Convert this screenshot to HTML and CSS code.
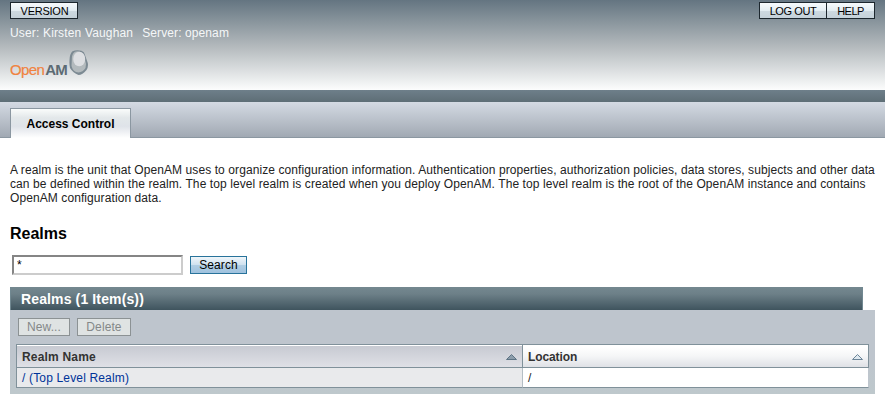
FILE: index.html
```html
<!DOCTYPE html>
<html lang="en">
<head>
<meta charset="utf-8">
<title>OpenAM</title>
<link rel="stylesheet" href="styles.css">
</head>
<body>
<header class="masthead">
  <div class="topbar">
    <button class="mast-btn version">VERSION</button>
    <div class="actions"><button class="mast-btn logout">LOG OUT</button><button class="mast-btn help">HELP</button></div>
  </div>
  <div class="session"><span class="user">User: Kirsten Vaughan</span><span class="server">Server: openam</span></div>
  <div class="logo">
    <span class="logo-open">Open</span><span class="logo-am">AM</span>
    <svg class="logo-mark" width="20" height="26" viewBox="0 0 20 26">
      <path d="M3.500 1.200 Q7.500 -.5 12.500 .8 Q15.500 1.800 16 5 L18.800 13 Q19.500 17 17.500 20 Q13.500 25 9.500 25 Q4 23 1 18 Q.2 15 .5 10 Q.6 4 3.500 1.200Z" fill="#7c8a93"/>
      <path d="M6 1.800 Q2.500 4 2.800 10 L2.500 16 Q4 22 9.500 22.500 Q14 22 16.500 18 L17 14 L15 5 Q11 0 6 1.800Z" fill="#b3babd"/>
      <ellipse cx="10.200" cy="9" rx="6" ry="7.300" fill="#dddfe2"/>
    </svg>
  </div>
</header>
<div class="divider"></div>
<nav class="tabs"><a class="tab">Access Control</a></nav>
<main class="content">
  <p class="intro"><span>A realm is the unit that OpenAM uses to organize configuration information. Authentication properties, authorization policies, data stores, subjects and other data</span><br><span>can be defined within the realm. The top level realm is created when you deploy OpenAM. The top level realm is the root of the OpenAM instance and contains</span><br><span>OpenAM configuration data.</span></p>
  <h1 class="title">Realms</h1>
  <div class="search"><input class="field" type="text" value="*"><button class="search-btn">Search</button></div>
  <section class="panel">
    <h2 class="panel-title">Realms (1 Item(s))</h2>
    <div class="panel-body">
      <div class="tools"><button class="tool new" disabled>New...</button><button class="tool delete" disabled>Delete</button></div>
      <div class="grid">
        <div class="head sorted"><span class="name-h">Realm Name</span><svg class="arrow" width="11" height="6" viewBox="0 0 11 6"><path d="M.5 5.500 L5.500 .5 L10.500 5.500Z" fill="#8c9dab" stroke="#5e7485"/></svg></div>
        <div class="head"><span class="loc-h">Location</span><svg class="arrow" width="11" height="6" viewBox="0 0 11 6"><path d="M.5 5.500 L5.500 .5 L10.500 5.500Z" fill="#dfe9f0" stroke="#6c8598"/></svg></div>
        <div class="cell shaded"><a class="link">/ (Top Level Realm)</a></div>
        <div class="cell last">/</div>
      </div>
    </div>
  </section>
</main>
</body>
</html>
```

FILE: styles.css
```css
* { box-sizing: border-box; }
body {
  margin: 0;
  background: #fff;
  color: #222;
  font: 12px/14px "Liberation Sans", Arial, sans-serif;
  overflow: hidden;
}
span, a { white-space: nowrap; }
button { margin: 0; padding: 0; font-family: inherit; white-space: nowrap; }
.masthead {
  height: 90px;
  padding: 2px 10px 0;
  background: linear-gradient(#647581, #b4babd 52%, #fcfdfd);
}
.topbar { display: flex; justify-content: space-between; height: 17px; }
.actions { display: flex; }
.mast-btn {
  height: 17px;
  border: 1px solid #1c272e;
  background: linear-gradient(#f6fafc, #e3edf2 50%, #cedae1 51%, #c5d2da);
  color: #000;
  font-size: 11px;
  line-height: 16px;
}
.version { width: 68px; padding-left: 1px; letter-spacing: -.25px; }
.logout { width: 68px; letter-spacing: -.4px; }
.help { width: 49px; margin-left: -1px; letter-spacing: -.5px; }
.session { display: flex; gap: 9px; margin-top: 7px; color: #f5f7f8; }
.user { letter-spacing: .16px; }
.server { letter-spacing: .1px; }
.logo { display: flex; height: 26px; margin-top: 10px; font-size: 15px; line-height: 17px; }
.logo-open { margin-top: 11px; color: #f0833f; letter-spacing: -.6px; -webkit-text-stroke: .2px #f0833f; }
.logo-am { margin: 11px 0 0 1px; color: #5c6b74; font-weight: bold; letter-spacing: -1px; }
.logo-mark { margin-left: 2px; }
.divider { height: 12px; background: linear-gradient(#6e7f8a, #5e6e76); }
.tabs {
  display: flex;
  height: 36px;
  padding: 6px 10px 0;
  border-bottom: 1px solid #8b97a1;
  background: linear-gradient(#d4dae3, #a1a9b3);
}
.tab {
  width: 121px;
  height: 30px;
  border: 1px solid #8b97a1;
  border-bottom: 0;
  background: linear-gradient(#fafcfb, #e3e8ea 30%, #dfe3e9 60%, #fff);
  color: #000;
  font-weight: bold;
  line-height: 30px;
  text-align: center;
}
.content { padding: 25px 10px 0; }
.intro { margin: 0; letter-spacing: .088px; }
.title { margin: 20px 0 0; color: #000; font-size: 16px; line-height: 18px; }
.search { display: flex; align-items: flex-start; gap: 7px; margin: 12px 0 0 2px; }
.field {
  width: 171px;
  height: 20px;
  padding: 0 3px;
  border: 2px solid #858585;
  border-right-color: #ccc;
  border-bottom-color: #ccc;
  background: #fff;
  font: 12px "Liberation Sans", Arial, sans-serif;
}
.search-btn {
  width: 57px;
  height: 18px;
  margin-top: 1px;
  border: 1px solid #28739b;
  background: linear-gradient(#f0f6fa, #cfe1ef 50%, #b1cee4 51%, #9fc2de);
  color: #000;
  font-size: 12px;
  letter-spacing: .1px;
}
.panel { margin-top: 12px; }
.panel-title {
  width: 853px;
  height: 23px;
  margin: 0;
  padding-left: 10px;
  border-right: 1px solid #718891;
  border-left: 1px solid #718891;
  background: linear-gradient(#748890, #6d8088 30%, #3f545e);
  color: #fff;
  font-size: 14px;
  letter-spacing: .13px;
  line-height: 24px;
}
.panel-body { height: 84px; padding: 8px 6px 6px; background: linear-gradient(#bec5cd 55%, #bec8cc); }
.tools { display: flex; gap: 7px; padding-left: 2px; }
.tool {
  height: 18px;
  border: 1px solid #8c9294;
  background: #dfe3e3;
  color: #848889;
  font-size: 12px;
  letter-spacing: .1px;
}
.new { width: 52px; }
.delete { width: 54px; }
.grid {
  display: grid;
  grid-template-columns: 507px 346px;
  grid-template-rows: 24px 20px;
  margin-top: 8px;
}
.head {
  display: flex;
  align-items: center;
  justify-content: space-between;
  padding: 1px 5px 0;
  border: 1px solid #80919a;
  border-left: 0;
  background: linear-gradient(#fff 10%, #f5f6f7 50%, #dfe1e6);
  color: #333;
  font-weight: bold;
}
.sorted {
  border-left: 1px solid #80919a;
  background: linear-gradient(#fff 1px, #c7cad2 1px, #dfe0e6);
}
.name-h { letter-spacing: .18px; }
.loc-h { letter-spacing: -.1px; }
.arrow { margin-top: 1px; }
.cell {
  padding: 3px 5px 0;
  border-right: 1px solid #b4bec5;
  border-bottom: 1px solid #80919a;
  background: #fff;
}
.shaded { border-left: 1px solid #80919a; background: #e9eaec; }
.last { border-right-color: #bec5cd; }
.link { color: #039; letter-spacing: .16px; }
```
